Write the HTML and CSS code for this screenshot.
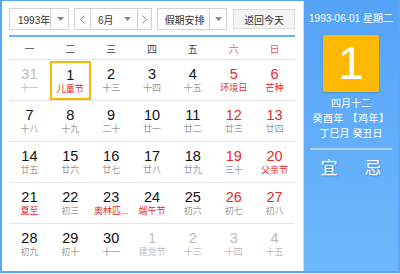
FILE: index.html
```html
<!DOCTYPE html>
<html>
<head>
<meta charset="utf-8">
<link rel="stylesheet" href="styles.css">
</head>
<body>
<div class="cal">
  <div class="main">
    <div class="toolbar">
      <div class="sel year"><span class="txt">1993年</span><span class="arr"><svg width="7" height="4" viewBox="0 0 7 4"><path d="M0 0H7L3.5 4Z" fill="#888"/></svg></span></div>
      <div class="sel month">
        <span class="nav left"><svg width="5" height="9" viewBox="0 0 5 9"><path d="M4.5 0.5L0.8 4.5L4.5 8.5" fill="none" stroke="#888" stroke-width="1"/></svg></span>
        <span class="mid"><span class="txt">6月</span><span class="arr2"><svg width="7" height="4" viewBox="0 0 7 4"><path d="M0 0H7L3.5 4Z" fill="#888"/></svg></span></span>
        <span class="nav right"><svg width="5" height="9" viewBox="0 0 5 9"><path d="M0.5 0.5L4.2 4.5L0.5 8.5" fill="none" stroke="#888" stroke-width="1"/></svg></span>
      </div>
      <div class="sel hol"><span class="txt">假期安排</span><span class="arr"><svg width="7" height="4" viewBox="0 0 7 4"><path d="M0 0H7L3.5 4Z" fill="#888"/></svg></span></div>
      <div class="btn">返回今天</div>
    </div>
    <div class="week">
      <span>一</span><span>二</span><span>三</span><span>四</span><span>五</span><span class="we">六</span><span class="we">日</span>
    </div>
    <div class="rows">
      <div class="row">
        <div class="cell other"><b>31</b><i>十一</i></div>
        <div class="cell sel-day"><b>1</b><i class="hd">儿童节</i></div>
        <div class="cell"><b>2</b><i>十三</i></div>
        <div class="cell"><b>3</b><i>十四</i></div>
        <div class="cell"><b>4</b><i>十五</i></div>
        <div class="cell wk"><b>5</b><i class="hd">环境日</i></div>
        <div class="cell wk"><b>6</b><i class="hd">芒种</i></div>
      </div>
      <div class="row">
        <div class="cell"><b>7</b><i>十八</i></div>
        <div class="cell"><b>8</b><i>十九</i></div>
        <div class="cell"><b>9</b><i>二十</i></div>
        <div class="cell"><b>10</b><i>廿一</i></div>
        <div class="cell"><b>11</b><i>廿二</i></div>
        <div class="cell wk"><b>12</b><i>廿三</i></div>
        <div class="cell wk"><b>13</b><i>廿四</i></div>
      </div>
      <div class="row">
        <div class="cell"><b>14</b><i>廿五</i></div>
        <div class="cell"><b>15</b><i>廿六</i></div>
        <div class="cell"><b>16</b><i>廿七</i></div>
        <div class="cell"><b>17</b><i>廿八</i></div>
        <div class="cell"><b>18</b><i>廿九</i></div>
        <div class="cell wk"><b>19</b><i>三十</i></div>
        <div class="cell wk"><b>20</b><i class="hd">父亲节</i></div>
      </div>
      <div class="row">
        <div class="cell"><b>21</b><i class="hd">夏至</i></div>
        <div class="cell"><b>22</b><i>初三</i></div>
        <div class="cell"><b>23</b><i class="hd">奥林匹...</i></div>
        <div class="cell"><b>24</b><i class="hd">端午节</i></div>
        <div class="cell"><b>25</b><i>初六</i></div>
        <div class="cell wk"><b>26</b><i>初七</i></div>
        <div class="cell wk"><b>27</b><i>初八</i></div>
      </div>
      <div class="row last">
        <div class="cell"><b>28</b><i>初九</i></div>
        <div class="cell"><b>29</b><i>初十</i></div>
        <div class="cell"><b>30</b><i>十一</i></div>
        <div class="cell other"><b>1</b><i>建党节</i></div>
        <div class="cell other"><b>2</b><i>十三</i></div>
        <div class="cell other"><b>3</b><i>十四</i></div>
        <div class="cell other"><b>4</b><i>十五</i></div>
      </div>
    </div>
  </div>
  <div class="side">
    <div class="date">1993-06-01 星期二</div>
    <div class="big">1</div>
    <div class="lunar">
      <div>四月十二</div>
      <div class="gz">癸酉年 【鸡年】</div>
      <div>丁巳月 癸丑日</div>
    </div>
    <div class="sep"></div>
    <div class="yj"><span>宜</span><span>忌</span></div>
  </div>
</div>
</body>
</html>
```

FILE: styles.css
```css
* { box-sizing: border-box; }
html, body { margin: 0; padding: 0; background: #fff; }
body { font-family: "Liberation Sans", "Noto Sans CJK SC", sans-serif; }

.cal {
  width: 400px;
  height: 273px;
  display: flex;
  border: 2px solid #5ba7f7;
  border-top-width: 1px;
}

.main {
  width: 302px;
  padding: 7px 8px 0 7px;
  border-right: 1px solid #dcdcdc;
  background: #fff;
}

.toolbar {
  display: flex;
  height: 22px;
  gap: 5px;
  white-space: nowrap;
}
.sel {
  display: flex;
  align-items: stretch;
  border: 1px solid #d3d3d3;
  background: #fff;
  font-size: 10px;
  color: #333;
}
.sel .txt { display: flex; align-items: center; white-space: nowrap; }
.sel .arr {
  width: 19px;
  flex: none;
  border-left: 1px solid #d3d3d3;
  display: flex;
  align-items: center;
  justify-content: center;
}
.year { width: 60px; }
.year .txt { flex: 1; padding-left: 8px; }
.month { width: 78px; }
.month .nav {
  display: flex; align-items: center; justify-content: center;
}
.month .left { width: 16px; border-right: 1px solid #d3d3d3; }
.month .right { width: 14px; border-left: 1px solid #d3d3d3; }
.month .mid { flex: 1; display: flex; align-items: center; padding-left: 7px; }
.month .arr2 { margin-left: 10px; display: flex; }
.hol { width: 71px; margin-left: 0; }
.hol .txt { flex: 1; padding-left: 7px; }
.hol .arr { width: 17px; }
.btn {
  width: 62px;
  margin-left: 1px;
  margin-top: 1px;
  height: 20px;
  border: 1px solid #dadada;
  background: #f4f4f4;
  font-size: 10px;
  color: #333;
  display: flex;
  align-items: center;
  justify-content: center;
}

.week {
  margin-top: 5px;
  border-top: 2px solid #6cb2f8;
  height: 25px;
  border-bottom: 1px solid #e3e3e3;
  display: grid;
  grid-template-columns: repeat(7, 1fr);
  align-items: center;
  font-size: 10px;
  color: #444;
}
.week span { text-align: center; }
.week .we { color: #e8595b; }

.row {
  display: grid;
  grid-template-columns: repeat(7, 1fr);
  height: 41px;
  border-bottom: 1px solid #e3e3e3;
}
.row.last { border-bottom: none; }
.cell {
  display: flex;
  flex-direction: column;
  align-items: center;
  padding-top: 5px;
}
.cell b {
  font-weight: normal;
  font-size: 14.5px;
  line-height: 18px;
  color: #111;
}
.cell i {
  font-style: normal;
  font-size: 9px;
  line-height: 11px;
  color: #9a9a9a;
  white-space: nowrap;
}
.cell .hd { color: #e22b2b; }
.cell.wk b { color: #e22b2b; }
.cell.other b, .cell.other i { color: #bcbcbc; }
.cell.sel-day { outline: 2px solid #fbb400; outline-offset: -2px; margin: 1px 0 0; }

.side {
  flex: 1;
  background: linear-gradient(#55a3f7, #6fb8fc);
  display: flex;
  flex-direction: column;
  align-items: center;
  color: #fff;
  padding-top: 11px;
}
.date { font-size: 10px; line-height: 14px; white-space: nowrap; }
.big {
  margin-top: 9px;
  width: 56px;
  height: 57px;
  background: #ffb901;
  border-radius: 2px;
  font-size: 46px;
  line-height: 57px;
  text-align: center;
  color: #fff;
  box-shadow: 0 1px 2px rgba(0,0,0,0.15);
}
.lunar {
  margin-top: 4px;
  font-size: 10px;
  line-height: 15px;
  text-align: center;
  white-space: nowrap;
}
.lunar .gz { letter-spacing: 0.5px; }
.sep {
  margin-top: 7px;
  width: 82px;
  height: 2px;
  background: #a8d1fb;
}
.yj {
  margin-top: 7px;
  display: flex;
  gap: 27px;
  font-size: 17px;
  line-height: 24px;
  text-shadow: 1px 1px 1px rgba(20,60,120,0.35);
}
```
